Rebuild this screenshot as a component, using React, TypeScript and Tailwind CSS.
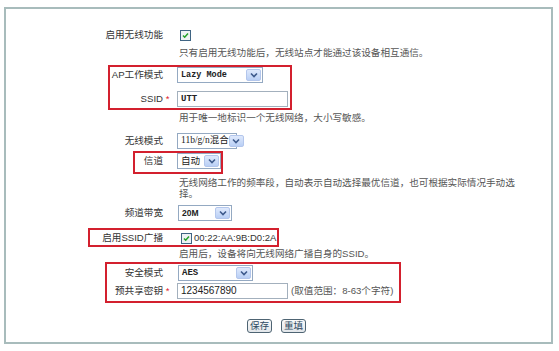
import React from "react";

const FONT = { fontFamily: "'Liberation Sans', 'Noto Sans CJK SC', sans-serif" };

function Chevron() {
  return (
    <div className="flex h-[12px] w-[15px] shrink-0 items-center justify-center rounded-[2px] border border-[#b3c6ec] bg-gradient-to-b from-[#dfe9fc] to-[#b9cff5]">
      <svg width="8" height="6" viewBox="0 0 8 6">
        <path d="M1 1.5 L4 4.5 L7 1.5" fill="none" stroke="#3e5a8c" strokeWidth="1.6" />
      </svg>
    </div>
  );
}

function Select({ w, text, cls }: { w: string; text: string; cls: string }) {
  return (
    <div className={`flex h-[16px] items-center border border-[#94a9c2] bg-white pl-[3px] pr-[1px] ${w}`}>
      <span className={`flex-1 whitespace-nowrap leading-none text-[#222] ${cls}`}>{text}</span>
      <Chevron />
    </div>
  );
}

function Check() {
  return (
    <svg width="11" height="11" viewBox="0 0 11 11" className="shrink-0">
      <rect x="0.5" y="0.5" width="10" height="10" fill="#eef2f5" stroke="#3f6483" />
      <path d="M3 5.5 L4.7 7.2 L8 3.6" fill="none" stroke="#22a02a" strokeWidth="1.5" />
    </svg>
  );
}

function Label({ text, star }: { text: React.ReactNode; star?: boolean }) {
  return (
    <div className="flex w-[166px] shrink-0 items-center justify-end text-[#333]">
      <span className="whitespace-nowrap">{text}</span>
      <span className="w-[9px] text-center text-[#e0202a]">{star ? "*" : ""}</span>
    </div>
  );
}

function Row({ mt, label, star, children }: { mt: string; label?: React.ReactNode; star?: boolean; children: React.ReactNode }) {
  return (
    <div className={`flex h-[16px] items-center ${mt}`}>
      <Label text={label ?? ""} star={star} />
      <div className="ml-[5px] flex items-center">{children}</div>
    </div>
  );
}

function Help({ mt, children, extra = "" }: { mt: string; children: React.ReactNode; extra?: string }) {
  return (
    <div className={`ml-[172px] pl-[1px] text-[#555] ${mt} ${extra}`}>{children}</div>
  );
}

export default function App() {
  return (
    <div className="h-[351px] w-[559px] bg-white pl-[4px] pt-[7px] text-[9.6px]" style={FONT}>
      <div className="relative flex h-[337px] w-[549px] flex-col border-2 border-[#a8bcbc]">
        <Row mt="mt-[18px]" label="启用无线功能">
          <div className="ml-[3px]"><Check /></div>
        </Row>
        <Help mt="mt-[4px]" extra="h-[12px] leading-[12px] whitespace-nowrap">只有启用无线功能后，无线站点才能通过该设备相互通信。</Help>
        <Row mt="mt-[8px]" label="AP工作模式">
          <Select w="w-[86px]" text="Lazy Mode" cls="font-bold text-[8.5px] [font-family:'Liberation_Mono',monospace]" />
        </Row>
        <Row mt="mt-[8px]" label="SSID" star>
          <div className="flex h-[16px] w-[111px] items-center border border-[#a3b0bd] bg-white pl-[3px]">
            <span className="font-bold text-[9px] leading-none text-[#222] [font-family:'Liberation_Mono',monospace]">UTT</span>
          </div>
        </Row>
        <Help mt="mt-[5px]" extra="h-[12px] leading-[12px] whitespace-nowrap">用于唯一地标识一个无线网络，大小写敏感。</Help>
        <Row mt="mt-[9px]" label="无线模式">
          <Select w="w-[60px]" text="11b/g/n混合" cls="text-[9.5px] [font-family:'Liberation_Serif','Noto_Sans_CJK_SC',serif]" />
        </Row>
        <Row mt="mt-[4px]" label="信道">
          <Select w="w-[44px]" text="自动" cls="text-[9.6px]" />
        </Row>
        <Help mt="mt-[8px]" extra="w-[340px] leading-[11px]">无线网络工作的频率段，自动表示自动选择最优信道，也可根据实际情况手动选择。</Help>
        <Row mt="mt-[6px]" label="频道带宽">
          <div className="ml-[1px]">
            <Select w="w-[54px]" text="20M" cls="font-bold text-[8.5px]" />
          </div>
        </Row>
        <Row mt="mt-[9px]" label="启用SSID广播">
          <div className="ml-[4px] flex items-center gap-[2px]">
            <Check />
            <span className="text-[9.5px] text-[#333]">00:22:AA:9B:D0:2A</span>
          </div>
        </Row>
        <Help mt="mt-[2px]" extra="h-[12px] leading-[12px] whitespace-nowrap">启用后，设备将向无线网络广播自身的SSID。</Help>
        <Row mt="mt-[5px]" label="安全模式">
          <div className="ml-[1px]">
            <Select w="w-[75px]" text="AES" cls="font-bold text-[9px] [font-family:'Liberation_Mono',monospace]" />
          </div>
        </Row>
        <Row mt="mt-[2px]" label="预共享密钥" star>
          <div className="flex h-[16px] w-[111px] items-center border border-[#a3b0bd] bg-white pl-[3px]">
            <span className="text-[10px] leading-none text-[#222]">1234567890</span>
          </div>
          <span className="ml-[3px] whitespace-nowrap text-[#555]">(取值范围：8-63个字符)</span>
        </Row>
        <div className="mt-[20px] flex h-[14px] justify-center gap-[9px] pr-[4px]">
          <button className="flex h-[14px] w-[25px] items-center justify-center rounded-[3px] border border-[#4e6473] bg-gradient-to-b from-[#fafafa] to-[#e2e6ea] text-[9.6px] leading-none text-[#2f4b63]">保存</button>
          <button className="flex h-[14px] w-[25px] items-center justify-center rounded-[3px] border border-[#4e6473] bg-gradient-to-b from-[#fafafa] to-[#e2e6ea] text-[9.6px] leading-none text-[#2f4b63]">重填</button>
        </div>

        <div className="pointer-events-none absolute left-[102px] top-[56px] h-[45px] w-[184px] border-2 border-[#d3202e]" />
        <div className="pointer-events-none absolute left-[127px] top-[142px] h-[23px] w-[90px] border-2 border-[#d3202e]" />
        <div className="pointer-events-none absolute left-[82px] top-[219px] h-[19px] w-[191px] border-2 border-[#d3202e]" />
        <div className="pointer-events-none absolute left-[99px] top-[253px] h-[41px] w-[296px] border-2 border-[#d3202e]" />
      </div>
    </div>
  );
}
